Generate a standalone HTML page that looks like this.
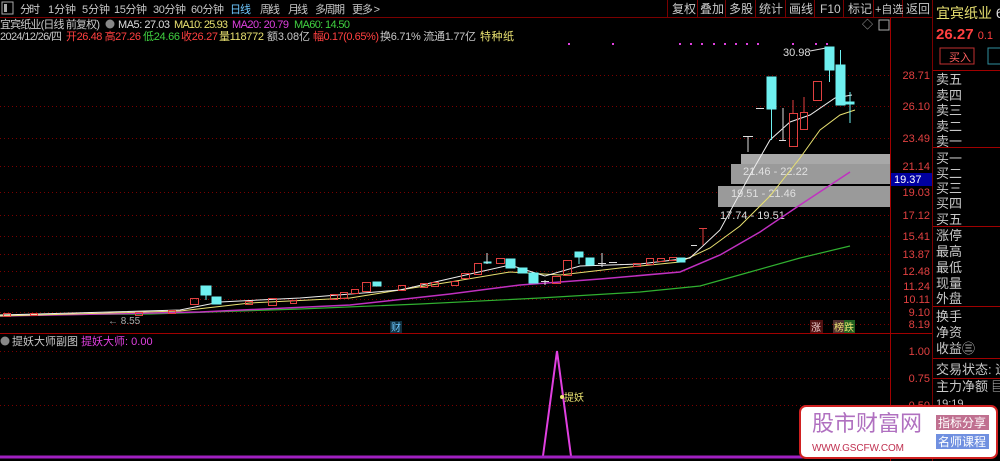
<!DOCTYPE html>
<html><head><meta charset="utf-8"><style>
body{margin:0;background:#000;width:1000px;height:461px;overflow:hidden;font-family:"Liberation Sans","Noto Sans CJK SC",sans-serif;}
svg{display:block}
text{font-family:"Liberation Sans","Noto Sans CJK SC",sans-serif;}
</style></head><body>
<svg width="1000" height="461" viewBox="0 0 1000 461" xmlns="http://www.w3.org/2000/svg">
<rect width="1000" height="461" fill="#000"/>
<line x1="0" y1="17.5" x2="932" y2="17.5" stroke="#7a0000"/>
<rect x="2" y="2" width="11" height="12" fill="none" stroke="#aaa"/><rect x="4" y="4" width="3" height="8" fill="#aaa"/>
<g font-size="11" fill="#c8c8c8">
<text x="20" y="13" textLength="20">分时</text><text x="48" y="13" textLength="28">1分钟</text><text x="82" y="13" textLength="28">5分钟</text><text x="114" y="13" textLength="33">15分钟</text><text x="153" y="13" textLength="33">30分钟</text><text x="191" y="13" textLength="33">60分钟</text>
<text x="230" y="13" fill="#6ec8ff" textLength="21">日线</text><text x="260" y="13" textLength="20">周线</text><text x="288" y="13" textLength="20">月线</text><text x="315" y="13" textLength="30">多周期</text><text x="352" y="13" textLength="28">更多 &gt;</text>
</g>
<g stroke="#7a0000"><line x1="667.5" y1="0" x2="667.5" y2="17"/><line x1="697.5" y1="0" x2="697.5" y2="17"/><line x1="725.5" y1="0" x2="725.5" y2="17"/><line x1="755.5" y1="0" x2="755.5" y2="17"/><line x1="785.5" y1="0" x2="785.5" y2="17"/><line x1="814.5" y1="0" x2="814.5" y2="17"/><line x1="843.5" y1="0" x2="843.5" y2="17"/><line x1="873.5" y1="0" x2="873.5" y2="17"/><line x1="902.5" y1="0" x2="902.5" y2="17"/><line x1="932.5" y1="0" x2="932.5" y2="461"/></g>
<g font-size="12" fill="#c8c8c8">
<text x="672" y="13">复权</text><text x="700" y="13">叠加</text><text x="729" y="13">多股</text><text x="759" y="13">统计</text><text x="789" y="13">画线</text><text x="820" y="13">F10</text><text x="848" y="13">标记</text><text x="875" y="13" font-size="11">+自选</text><text x="906" y="13">返回</text>
</g>
<g font-size="11">
<text x="0" y="28" fill="#c8c8c8" textLength="100">宜宾纸业(日线 前复权)</text>
<circle cx="110" cy="24" r="4.5" fill="#888"/>
<text x="118" y="28" fill="#ddd" textLength="52">MA5: 27.03</text><text x="174" y="28" fill="#e8e070" textLength="54">MA10: 25.93</text><text x="232" y="28" fill="#e040e0" textLength="57">MA20: 20.79</text><text x="294" y="28" fill="#40d040" textLength="56">MA60: 14.50</text>
<text x="0" y="40" fill="#c8c8c8" textLength="62">2024/12/26/四</text>
<text x="66" y="40" fill="#ff4040" textLength="75">开26.48 高27.26</text>
<text x="143" y="40" fill="#40d040" textLength="37">低24.66</text>
<text x="181" y="40" fill="#ff4040" textLength="37">收26.27</text>
<text x="219" y="40" fill="#e8e070" textLength="45">量118772</text>
<text x="267" y="40" fill="#c8c8c8" textLength="43">额3.08亿</text>
<text x="313" y="40" fill="#ff4040" textLength="66">幅0.17(0.65%)</text>
<text x="380" y="40" fill="#c8c8c8" textLength="96">换6.71% 流通1.77亿</text>
<text x="480" y="40" fill="#e8e070" textLength="34">特种纸</text>
</g>
<line x1="890.5" y1="18" x2="890.5" y2="461" stroke="#a00000"/>
<line x1="0" y1="333.5" x2="932" y2="333.5" stroke="#a00000"/>
<text x="862" y="28" font-size="11" fill="#aaa">◇</text><rect x="879" y="20" width="10" height="10" fill="none" stroke="#aaa"/>
<g stroke="#7a0000" stroke-dasharray="1,3">
<line x1="0" y1="75.5" x2="890" y2="75.5"/><line x1="0" y1="106.5" x2="890" y2="106.5"/><line x1="0" y1="138.5" x2="890" y2="138.5"/><line x1="0" y1="166.5" x2="890" y2="166.5"/><line x1="0" y1="192.5" x2="890" y2="192.5"/><line x1="0" y1="215.5" x2="890" y2="215.5"/><line x1="0" y1="236.5" x2="890" y2="236.5"/><line x1="0" y1="254.5" x2="890" y2="254.5"/><line x1="0" y1="271.5" x2="890" y2="271.5"/><line x1="0" y1="286.5" x2="890" y2="286.5"/><line x1="0" y1="299.5" x2="890" y2="299.5"/><line x1="0" y1="312.5" x2="890" y2="312.5"/><line x1="0" y1="324.5" x2="890" y2="324.5"/>
<line x1="0" y1="351.5" x2="890" y2="351.5"/><line x1="0" y1="378.5" x2="890" y2="378.5"/><line x1="0" y1="405.5" x2="890" y2="405.5"/>
</g>
<g font-size="11" fill="#e04040" text-anchor="end">
<text x="930" y="79">28.71</text><text x="930" y="110">26.10</text><text x="930" y="142">23.49</text><text x="930" y="170">21.14</text><text x="930" y="196">19.03</text><text x="930" y="219">17.12</text><text x="930" y="240">15.41</text><text x="930" y="258">13.87</text><text x="930" y="275">12.48</text><text x="930" y="290">11.24</text><text x="930" y="303">10.11</text><text x="930" y="316">9.10</text><text x="930" y="328">8.19</text>
<text x="930" y="355">1.00</text><text x="930" y="382">0.75</text><text x="930" y="409">0.50</text>
</g>
<rect x="891" y="173" width="41" height="13" fill="#0000a0"/><text x="894" y="183" font-size="11" fill="#fff">19.37</text>
<rect x="741" y="154" width="149" height="10" fill="#a8a8a8"/>
<rect x="731" y="164" width="159" height="20" fill="#9a9a9a"/>
<rect x="718" y="186" width="172" height="21" fill="#9a9a9a"/>
<g font-size="11" fill="#e0e0e0"><text x="743" y="175">21.46 - 22.22</text><text x="731" y="197">19.51 - 21.46</text><text x="720" y="219" fill="#ddd">17.74 - 19.51</text></g>
<g fill="#e040e0"><rect x="568" y="43" width="2" height="2"/><rect x="612" y="43" width="2" height="2"/><rect x="679" y="43" width="2" height="2"/><rect x="690" y="43" width="2" height="2"/><rect x="701" y="43" width="2" height="2"/><rect x="713" y="43" width="2" height="2"/><rect x="724" y="43" width="2" height="2"/><rect x="735" y="43" width="2" height="2"/><rect x="746" y="43" width="2" height="2"/><rect x="757" y="43" width="2" height="2"/><rect x="792" y="43" width="2" height="2"/><rect x="815" y="43" width="2" height="2"/><rect x="826" y="43" width="2" height="2"/></g>
<text x="783" y="56" font-size="11" fill="#ddd">30.98</text><line x1="810" y1="51" x2="826" y2="48" stroke="#ddd"/>
<polyline fill="none" stroke="#30b030" stroke-width="1.2" points="0,315 150,314 300,309 420,304 540,298 640,292 700,286 750,272 800,258 850,246"/>
<polyline fill="none" stroke="#c030c0" stroke-width="1.5" points="0,316 200,312 350,305 450,294 520,285 600,279 680,272 720,255 760,232 800,205 850,172"/>
<polyline fill="none" stroke="#e8e070" stroke-width="1" points="0,316 180,311 250,303 350,298 450,282 510,272 560,275 620,268 680,262 710,248 740,226 770,196 800,158 820,130 840,115 855,110"/>
<polyline fill="none" stroke="#eee" stroke-width="1" points="0,315 180,310 220,302 300,298 400,290 470,274 510,265 545,276 580,266 640,264 690,258 720,230 750,175 770,140 790,122 810,115 835,98 852,95"/>
<g stroke="#e04040" fill="none" stroke-width="1">
<rect x="3.5" y="313.5" width="7" height="3"/><rect x="30.5" y="313.5" width="7" height="2"/><rect x="135.5" y="312.5" width="7" height="3"/><rect x="168.5" y="310.5" width="7" height="3"/>
<rect x="190.5" y="298.5" width="8" height="6"/><rect x="245.5" y="301.5" width="7" height="3"/><rect x="268.5" y="298.5" width="8" height="7"/><rect x="290.5" y="300.5" width="6" height="3"/>
<rect x="330.5" y="294.5" width="7" height="5"/><rect x="340.5" y="292.5" width="7" height="6"/><rect x="351.5" y="289.5" width="7" height="4"/><rect x="362.5" y="282.5" width="8" height="9"/>
<rect x="398.5" y="285.5" width="7" height="5"/><rect x="420.5" y="283.5" width="7" height="4"/><rect x="431.5" y="282.5" width="7" height="4"/><rect x="451.5" y="281.5" width="7" height="4"/>
<rect x="461.5" y="273.5" width="8" height="5"/><rect x="474.5" y="263.5" width="7" height="11"/><rect x="496.5" y="258.5" width="8" height="5"/>
<rect x="552.5" y="276.5" width="8" height="7"/><rect x="563.5" y="260.5" width="8" height="15"/>
<rect x="633.5" y="263.5" width="7" height="3"/><rect x="646.5" y="258.5" width="7" height="6"/><rect x="657.5" y="258.5" width="7" height="3"/><rect x="669.5" y="257.5" width="7" height="3"/>
<line x1="703" y1="228" x2="703" y2="245"/><line x1="699" y1="228.5" x2="707" y2="228.5"/>
<rect x="789.5" y="113.5" width="8" height="33"/><rect x="800.5" y="112.5" width="7" height="17"/><rect x="813.5" y="81.5" width="8" height="19"/>
<line x1="793" y1="113" x2="793" y2="100"/><line x1="804" y1="112" x2="804" y2="97"/>
</g>
<g fill="#6ef0f0" stroke="#6ef0f0">
<rect x="201" y="286" width="10" height="9"/><line x1="206" y1="295" x2="206" y2="300"/>
<rect x="212" y="297" width="9" height="7"/><rect x="373" y="282" width="8" height="4"/>
<rect x="484" y="262" width="7" height="1"/>
<rect x="506" y="259" width="9" height="9"/><rect x="518" y="268" width="9" height="5"/><rect x="529" y="273" width="9" height="10"/>
<rect x="575" y="252" width="8" height="5"/><line x1="579" y1="257" x2="579" y2="264"/><rect x="586" y="258" width="8" height="7"/>
<rect x="677" y="258" width="8" height="4"/>
<rect x="767" y="77" width="9" height="32"/><line x1="771.5" y1="109" x2="771.5" y2="140"/>
<rect x="825" y="47" width="9" height="23"/><line x1="829.5" y1="70" x2="829.5" y2="82"/>
<rect x="836" y="65" width="9" height="40"/><line x1="840.5" y1="50" x2="840.5" y2="65"/>
<rect x="845" y="102" width="9" height="2"/><line x1="850" y1="92" x2="850" y2="123"/>
</g>
<g stroke="#ddd">
<line x1="487" y1="253" x2="487" y2="264"/><line x1="602" y1="253" x2="602" y2="267"/><line x1="598" y1="263.5" x2="606" y2="263.5"/><line x1="609" y1="262.5" x2="617" y2="262.5"/><line x1="620" y1="264.5" x2="628" y2="264.5"/><line x1="545" y1="280" x2="545" y2="285"/><line x1="541" y1="281.5" x2="549" y2="281.5"/>
<line x1="691" y1="245.5" x2="697" y2="245.5"/>
<line x1="748" y1="137" x2="748" y2="152"/><line x1="743" y1="136.5" x2="753" y2="136.5"/>
<line x1="783" y1="108" x2="783" y2="140"/><line x1="779" y1="140.5" x2="786" y2="140.5"/><line x1="756" y1="108.5" x2="764" y2="108.5"/>
</g>
<g fill="#aaa" font-size="10"><text x="108" y="324">← 8.55</text></g>
<rect x="390" y="321" width="12" height="12" fill="#103040"/><text x="391" y="331" font-size="10" fill="#6ec8ff">财</text>
<rect x="810" y="320" width="13" height="13" fill="#501010"/><text x="811" y="331" font-size="10" fill="#f0d0d0">涨</text>
<rect x="833" y="320" width="11" height="13" fill="#503030"/><rect x="844" y="320" width="11" height="13" fill="#206020"/><text x="834" y="331" font-size="10" fill="#e8e070">榜跌</text>
<circle cx="5" cy="341" r="4.5" fill="#888"/>
<text x="12" y="345" font-size="11" fill="#c8c8c8">提妖大师副图 <tspan fill="#e040e0">提妖大师: 0.00</tspan></text>
<polyline fill="none" stroke="#e040e0" stroke-width="2" points="543,456 557,351 571,456"/>
<circle cx="562" cy="397" r="2" fill="#e8e070"/><text x="564" y="401" font-size="10" fill="#e8e070">提妖</text>
<line x1="0" y1="457" x2="890" y2="457" stroke="#a020c0" stroke-width="3"/>
<text x="936" y="18" font-size="14" fill="#e8e070">宜宾纸业 <tspan fill="#ddd">6</tspan></text>
<text x="936" y="39" font-size="15" font-weight="bold" fill="#ff4040">26.27 <tspan font-size="11" font-weight="normal">0.1</tspan></text>
<rect x="940" y="48" width="34" height="16" fill="none" stroke="#c03030"/><text x="949" y="61" font-size="11" fill="#ff6060">买入</text>
<rect x="988" y="48" width="14" height="16" fill="none" stroke="#3090a0"/>
<line x1="933" y1="70.5" x2="1000" y2="70.5" stroke="#a00000"/>
<line x1="933" y1="147.5" x2="1000" y2="147.5" stroke="#a00000"/>
<line x1="933" y1="226.5" x2="1000" y2="226.5" stroke="#a00000"/>
<line x1="933" y1="306.5" x2="1000" y2="306.5" stroke="#a00000"/>
<line x1="933" y1="358.5" x2="1000" y2="358.5" stroke="#a00000"/>
<line x1="933" y1="378.5" x2="1000" y2="378.5" stroke="#a00000"/>
<g font-size="13" fill="#c8c8c8">
<text x="936" y="84">卖五</text><text x="936" y="100">卖四</text><text x="936" y="115">卖三</text><text x="936" y="131">卖二</text><text x="936" y="146">卖一</text>
<text x="936" y="163">买一</text><text x="936" y="178">买二</text><text x="936" y="193">买三</text><text x="936" y="208">买四</text><text x="936" y="224">买五</text>
<text x="936" y="240">涨停</text><text x="936" y="256">最高</text><text x="936" y="272">最低</text><text x="936" y="288">现量</text><text x="936" y="303">外盘</text>
<text x="936" y="321">换手</text><text x="936" y="337">净资</text><text x="936" y="353">收益㊂</text>
<text x="936" y="374">交易状态: 运</text><text x="936" y="391">主力净额 ▤</text>
<text x="936" y="407" font-size="11">19:19</text>
</g>
<rect x="800" y="406" width="197" height="52" rx="6" fill="#fff" stroke="#d02020" stroke-width="2"/>
<text x="812" y="431" font-size="22" fill="#b070c0" font-family="Liberation Serif,Noto Serif CJK SC,serif">股市财富网</text>
<text x="812" y="451" font-size="10" fill="#c03050" font-family="Liberation Serif,serif" textLength="92">WWW.GSCFW.COM</text>
<rect x="936" y="415" width="53" height="15" fill="#c07090"/><text x="938" y="427" font-size="12" fill="#fff">指标分享</text>
<rect x="936" y="434" width="53" height="15" fill="#7090e0"/><text x="938" y="446" font-size="12" fill="#fff">名师课程</text>
</svg>
</body></html>
